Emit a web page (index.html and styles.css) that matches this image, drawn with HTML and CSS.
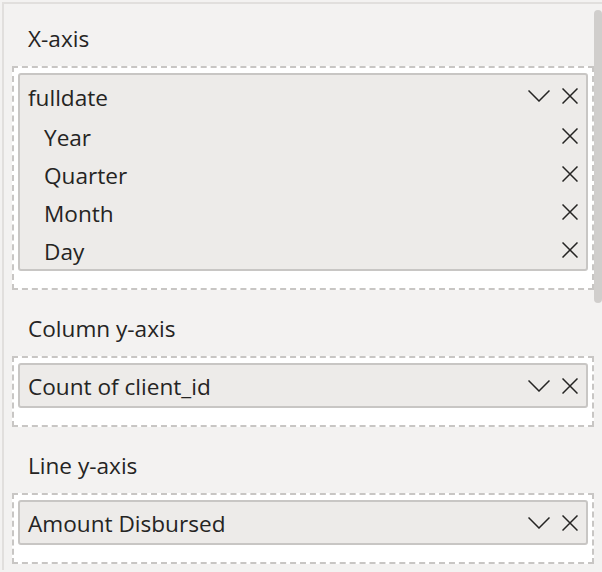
FILE: index.html
```html
<!DOCTYPE html>
<html>
<head>
<meta charset="utf-8">
<link rel="stylesheet" href="styles.css">
</head>
<body>
<div class="pane">
  <div class="content">
    <div class="section">
      <div class="label">X-axis</div>
      <div class="well">
        <div class="field">
          <div class="row row-head">
            <span class="name">fulldate</span>
            <span class="icons">
              <svg class="chev" width="22" height="12" viewBox="0 0 22 12"><polyline points="0.5,0.5 11,11 21.5,0.5" fill="none" stroke="#252423" stroke-width="1.5"/></svg>
              <svg class="x" width="16" height="16" viewBox="0 0 16 16"><path d="M0.5 0.5 L15.5 15.5 M15.5 0.5 L0.5 15.5" stroke="#252423" stroke-width="1.5"/></svg>
            </span>
          </div>
          <div class="row sub">
            <span class="name">Year</span>
            <span class="icons"><svg class="x" width="16" height="16" viewBox="0 0 16 16"><path d="M0.5 0.5 L15.5 15.5 M15.5 0.5 L0.5 15.5" stroke="#252423" stroke-width="1.5"/></svg></span>
          </div>
          <div class="row sub">
            <span class="name">Quarter</span>
            <span class="icons"><svg class="x" width="16" height="16" viewBox="0 0 16 16"><path d="M0.5 0.5 L15.5 15.5 M15.5 0.5 L0.5 15.5" stroke="#252423" stroke-width="1.5"/></svg></span>
          </div>
          <div class="row sub">
            <span class="name">Month</span>
            <span class="icons"><svg class="x" width="16" height="16" viewBox="0 0 16 16"><path d="M0.5 0.5 L15.5 15.5 M15.5 0.5 L0.5 15.5" stroke="#252423" stroke-width="1.5"/></svg></span>
          </div>
          <div class="row sub">
            <span class="name">Day</span>
            <span class="icons"><svg class="x" width="16" height="16" viewBox="0 0 16 16"><path d="M0.5 0.5 L15.5 15.5 M15.5 0.5 L0.5 15.5" stroke="#252423" stroke-width="1.5"/></svg></span>
          </div>
        </div>
      </div>
    </div>

    <div class="section">
      <div class="label">Column y-axis</div>
      <div class="well">
        <div class="field">
          <div class="row row-single">
            <span class="name">Count of client_id</span>
            <span class="icons">
              <svg class="chev" width="22" height="12" viewBox="0 0 22 12"><polyline points="0.5,0.5 11,11 21.5,0.5" fill="none" stroke="#252423" stroke-width="1.5"/></svg>
              <svg class="x" width="16" height="16" viewBox="0 0 16 16"><path d="M0.5 0.5 L15.5 15.5 M15.5 0.5 L0.5 15.5" stroke="#252423" stroke-width="1.5"/></svg>
            </span>
          </div>
        </div>
      </div>
    </div>

    <div class="section">
      <div class="label">Line y-axis</div>
      <div class="well">
        <div class="field">
          <div class="row row-single">
            <span class="name">Amount Disbursed</span>
            <span class="icons">
              <svg class="chev" width="22" height="12" viewBox="0 0 22 12"><polyline points="0.5,0.5 11,11 21.5,0.5" fill="none" stroke="#252423" stroke-width="1.5"/></svg>
              <svg class="x" width="16" height="16" viewBox="0 0 16 16"><path d="M0.5 0.5 L15.5 15.5 M15.5 0.5 L0.5 15.5" stroke="#252423" stroke-width="1.5"/></svg>
            </span>
          </div>
        </div>
      </div>
    </div>
  </div>
  <div class="scroll"><div class="thumb"></div></div>
</div>
</body>
</html>
```

FILE: styles.css
```css
html, body {
  margin: 0;
  padding: 0;
  background: #f3f2f1;
  overflow: hidden;
}
body {
  width: 602px;
  height: 572px;
  font-family: "Open Sans", "Noto Sans", sans-serif;
  color: #252423;
}
.pane {
  margin: 2px 0 0 2px;
  border-top: 2px solid #e1dfdd;
  border-left: 2px solid #e1dfdd;
  display: flex;
  height: 566px;
}
.content {
  flex: 1;
  padding: 21px 0 0 8px;
  display: flex;
  flex-direction: column;
  gap: 25px;
}
.scroll {
  width: 8px;
  flex: none;
}
.thumb {
  margin-top: 6px;
  height: 293px;
  background: #d0cecc;
  border-radius: 4px;
}
.label {
  font-size: 22.6px;
  line-height: 28px;
  height: 28px;
  padding-left: 16px;
  margin-bottom: 13px;
}
.well {
  background: #ffffff;
  border: 2px dashed #c8c6c4;
  padding: 5px 4px 17px 4px;
}
.field {
  background: #edebe9;
  border: 2px solid #c8c6c4;
  border-radius: 3px;
}
.row {
  display: flex;
  align-items: center;
  justify-content: space-between;
  font-size: 22.6px;
  padding: 0 8px 0 8px;
}
.row-head { height: 42px; }
.row-single { height: 41px; }
.row.sub { height: 38px; padding-left: 24px; }
.name { padding-top: 3px; }
.row-single .name { padding-top: 1px; }
.icons {
  display: flex;
  align-items: center;
  gap: 12px;
}
.icons svg { display: block; }
```
